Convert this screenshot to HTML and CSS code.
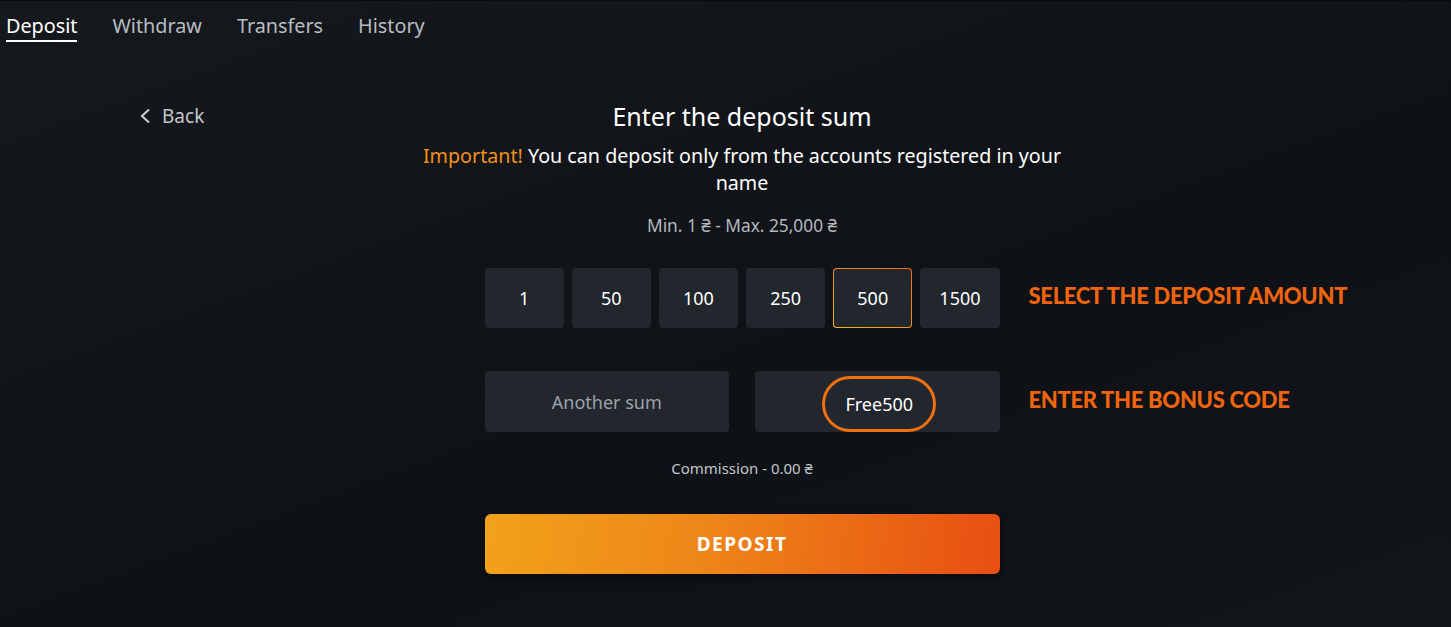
FILE: index.html
```html
<!DOCTYPE html>
<html lang="en">
<head>
  <meta charset="UTF-8" />
  <meta name="viewport" content="width=device-width, initial-scale=1.0" />
  <title>Deposit</title>
  <link rel="stylesheet" href="styles.css">
</head>
<body>
  <nav class="tabs">
    <a class="tab active" href="#">Deposit</a>
    <a class="tab" href="#">Withdraw</a>
    <a class="tab" href="#">Transfers</a>
    <a class="tab" href="#">History</a>
  </nav>

  <div class="page">
    <div class="side">
      <a class="back" href="#">
        <svg width="12" height="16" viewBox="0 0 12 16"><path d="M10 1.5 L3 8 L10 14.5" fill="none" stroke="#c4c8cd" stroke-width="2.2"/></svg>
        Back
      </a>
    </div>

    <div class="main">
      <h1>Enter the deposit sum</h1>
      <p class="note"><span class="important">Important!</span> You can deposit only from the accounts registered in your name</p>
      <p class="limits">Min. 1 ₴ - Max. 25,000 ₴</p>

      <div class="row amounts">
        <button class="amount">1</button>
        <button class="amount">50</button>
        <button class="amount">100</button>
        <button class="amount">250</button>
        <button class="amount selected">500</button>
        <button class="amount">1500</button>
        <span class="hint">SELECT THE DEPOSIT AMOUNT</span>
      </div>

      <div class="row fields">
        <div class="field placeholder">Another sum</div>
        <div class="field"><span class="circled">Free500</span></div>
        <span class="hint">ENTER THE BONUS CODE</span>
      </div>

      <p class="commission">Commission - 0.00 ₴</p>

      <button class="deposit">DEPOSIT</button>
    </div>
  </div>
</body>
</html>
```
FILE: styles.css
```css
body {
  margin: 0;
  height: 627px;
  overflow: hidden;
  font-family: "Noto Sans", "Open Sans", sans-serif;
  background: linear-gradient(160deg, #15181d 0%, #0e1115 60%, #121519 100%);
  color: #fff;
  border-top: 1px solid #0a0c0f;
  box-sizing: border-box;
}

.tabs {
  display: flex;
  gap: 35px;
  padding: 12px 0 0 6px;
}

.tab {
  color: #b9bdc3;
  text-decoration: none;
  font-size: 19.8px;
  line-height: 26px;
  padding-bottom: 1px;
  border-bottom: 2px solid transparent;
}

.tab.active {
  color: #fff;
  border-bottom-color: #fff;
}

.page {
  display: flex;
  padding: 59px 0 0 139px;
}

.side {
  width: 263px;
}

.back {
  display: flex;
  align-items: center;
  gap: 11px;
  color: #c4c8cd;
  text-decoration: none;
  font-size: 19px;
  line-height: 30px;
}

.main {
  width: 680px;
  display: flex;
  flex-direction: column;
  align-items: center;
  text-align: center;
}

h1 {
  margin: 0;
  font-size: 25px;
  font-weight: 400;
  line-height: 30px;
}

.note {
  margin: 11px 0 0;
  font-size: 19.7px;
  line-height: 27px;
  width: 680px;
}

.important {
  color: #f39019;
}

.limits {
  margin: 19px 0 0;
  font-size: 17.3px;
  line-height: 22px;
  color: #b4b8be;
}

.row {
  position: relative;
  display: flex;
  width: 515px;
}

.amounts {
  margin-top: 31px;
  gap: 8px;
}

.amount {
  flex: 1;
  height: 60px;
  border: 1px solid transparent;
  border-radius: 4px;
  background: #22272e;
  color: #fff;
  font-family: inherit;
  font-size: 18px;
}

.amount.selected {
  background: linear-gradient(#22272e, #22272e) padding-box,
    linear-gradient(30deg, #f5b51c, #ee6a20) border-box;
}

.hint {
  position: absolute;
  left: calc(100% + 29px);
  top: 50%;
  transform: translateY(calc(-50% - 3px));
  white-space: nowrap;
  font-family: Lato, sans-serif;
  font-weight: 900;
  font-size: 22px;
  letter-spacing: -0.3px;
  color: #ee640f;
}

.fields {
  margin-top: 43px;
  gap: 26px;
}

.field {
  flex: 1;
  height: 61px;
  border-radius: 4px;
  background: #22272e;
  display: flex;
  align-items: center;
  justify-content: center;
  font-size: 18px;
}

.field.placeholder {
  color: #9da2a9;
}

.circled {
  margin: 5px 0 0 4px;
  padding: 13px 20px;
  border: 3px solid #f07010;
  border-radius: 28px;
}

.commission {
  margin: 26px 0 0;
  font-size: 15px;
  line-height: 20px;
  color: #c2c6cb;
}

.deposit {
  margin-top: 36px;
  width: 515px;
  height: 60px;
  border: none;
  border-radius: 6px;
  background: linear-gradient(100deg, #f2a21a 0%, #ee8418 45%, #e84e12 100%);
  box-shadow: 0 4px 10px rgba(0, 0, 0, 0.35);
  color: #fff;
  font-family: inherit;
  font-weight: 700;
  font-size: 19px;
  letter-spacing: 1.5px;
}
```
